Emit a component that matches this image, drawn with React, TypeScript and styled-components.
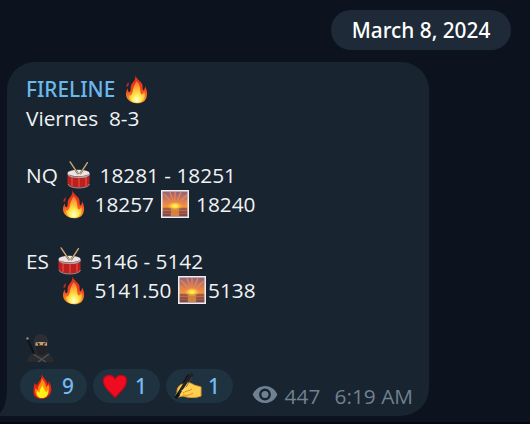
import React from 'react';
import styled, { createGlobalStyle } from 'styled-components';

const Global = createGlobalStyle`
  * { box-sizing: border-box; }
  body { margin: 0; background: #0d131e; overflow: hidden; }
`;

const Chat = styled.main`
  width: 530px;
  height: 424px;
  padding: 10px 19px 0 7px;
  background: #0d131e;
  border-bottom: 2px solid #05080f;
  font-family: 'Open Sans', 'Noto Sans', sans-serif;
  font-size: 20.8px;
  color: #f0f3f5;
`;

const DateBadge = styled.div`
  width: 180px;
  height: 40px;
  margin-left: auto;
  border-radius: 20px;
  background: #1e2a37;
  color: #fff;
  font-family: 'Noto Sans', sans-serif;
  font-weight: 500;
  line-height: 40px;
  text-align: center;
  white-space: nowrap;
`;

const Bubble = styled.article`
  position: relative;
  display: flex;
  flex-direction: column;
  width: 422px;
  height: 354px;
  margin-top: 12px;
  padding: 13px 16px 0 19px;
  border-radius: 28px 28px 28px 0;
  background: #18242f;
`;

const Tail = styled.svg`
  position: absolute;
  left: -7px;
  bottom: 0;
  display: block;
`;

const Line = styled.div<{ $indent?: number }>`
  display: flex;
  align-items: center;
  height: 28.7px;
  flex: none;
  padding-left: ${p => p.$indent ?? 0}px;
  line-height: 28.7px;
  white-space: pre;
`;

const Label = styled.span<{ $width?: number }>`
  flex: none;
  width: ${p => (p.$width ? `${p.$width}px` : 'auto')};
`;

const Channel = styled(Label)`
  color: #6ab8ed;
  font-family: 'Noto Sans', sans-serif;
  font-weight: 500;
`;

const Emoji = styled.svg<{ $gap?: number }>`
  display: block;
  flex: none;
  width: 28px;
  height: 28px;
  margin-right: ${p => p.$gap ?? 0}px;
  overflow: visible;
`;

const Footer = styled.footer`
  display: flex;
  align-items: flex-start;
  flex: none;
  height: 42px;
  margin: 7px 0 0 -6px;
  gap: 6px;
`;

const Reaction = styled.div`
  display: flex;
  align-items: center;
  flex: none;
  width: 67px;
  height: 34px;
  padding-left: 8px;
  border-radius: 17px;
  background: #1e3240;
  color: #77b9f1;
  font-family: 'Noto Sans', sans-serif;
  font-weight: 500;
  line-height: 34px;
`;

const Meta = styled.div`
  display: flex;
  align-items: center;
  height: 28px;
  margin: 13px 0 0 auto;
  color: #708191;
  line-height: 28px;
  white-space: nowrap;
`;

const Eye = styled.svg`
  width: 26px;
  height: 19px;
  margin: -3px 7px 0 0;
  flex: none;
`;

const Views = styled.span`
  width: 50px;
`;

const Fire = ({ id, gap, vivid }: { id: string; gap?: number; vivid?: boolean }) => (
  <Emoji viewBox="0 0 28 28" $gap={gap}>
    <defs>
      <linearGradient id={id} x1="0" y1="0" x2="0" y2="1">
        <stop offset="0" stopColor="#d92d12" />
        <stop offset=".5" stopColor="#f2401b" />
        <stop offset="1" stopColor="#fdb02a" />
      </linearGradient>
      <radialGradient id={`${id}c`} cx=".5" cy=".88" r=".8">
        <stop offset="0" stopColor="#fffde0" />
        <stop offset=".3" stopColor="#fff05d" />
        <stop offset=".68" stopColor="#ffb52e" />
        <stop offset="1" stopColor="#f77845" />
      </radialGradient>
    </defs>
    {vivid ? (
      <g transform="translate(2 2) scale(.89)">
        <path d="M13 0C15 5 19 6 20 12C21 10 21 9 21 8C24 13 25 18 23 22C21 26 17 28 13 28C7 28 3 24 4 18C4 14 5 12 5 10L8 13C9 8 14 7 13 0Z" fill="#e72216" />
        <path d="M13 4C15 8 18 10 18 15L21 12C23 19 21 26 14 27C8 27 5 23 6 16L9 18C9 11 14 10 13 4Z" fill="#ff8d0c" />
        <path d="M14 11C14 16 18 18 18 21L20 18C21 24 18 27 13 27C8 26 7 23 8 19L11 21C10 17 14 15 14 11Z" fill="#fff017" />
      </g>
    ) : (
      <g transform="translate(0 .3) scale(.96 1)">
        <path d="M13 0C14 4 19 6 20 9C21 12 20 14 21 15C22 15 23 13 23 11C26 16 26 22 22 26C18 29 9 29 5 24C2 20 3 16 5 13C5 16 6 17 7 17C9 14 7 12 9 9C11 6 13 5 13 0Z" fill={`url(#${id})`} />
        <path d="M14 6C17 8 18 12 18 15C18 18 19 20 20 19C21 19 22 17 22 16C24 21 22 26 17 27C11 29 6 25 6 19C7 22 9 20 10 17C10 13 12 10 14 6Z" fill={`url(#${id}c)`} />
        <path d="M4 12C3 10 4 8 6 7C6 9 6 11 4 12Z" fill="#c52a1d" />
      </g>
    )}
  </Emoji>
);

const Drum = ({ gap }: { gap: number }) => (
  <Emoji viewBox="0 0 28 28" $gap={gap}>
    <path d="M2.5 12V22C3 28.5 24.5 28.5 24.5 22V12Z" fill="#b9201f" />
    <path d="M7 16V25M14 17V26M21 16V25" stroke="#d53c31" strokeWidth="2" />
    <path d="M3 23C3.5 28.3 24 28.3 24.5 23" fill="none" stroke="#aaa4a8" strokeWidth=".8" />
    <path d="M3 12.5C3.5 17.7 23.5 17.7 24.5 12.5" fill="none" stroke="#a7a5ab" strokeWidth="1.4" />
    <ellipse cx="13.5" cy="12" rx="11" ry="3.2" fill="#e7e5e5" />
    <path d="M5 .8L13.2 13M22.5 1.5L15 13" stroke="#5d4638" strokeWidth="1.9" />
    <path d="M5 .8L13.2 13M22.5 1.5L15 13" stroke="#d7b781" strokeWidth="1.1" strokeLinecap="round" />
  </Emoji>
);

const Sunrise = ({ id, gap }: { id: string; gap: number }) => (
  <Emoji viewBox="0 0 28 28" $gap={gap}>
    <defs>
      <linearGradient id={id} x1="0" y1="0" x2="0" y2="1">
        <stop offset="0" stopColor="#8d6282" />
        <stop offset=".6" stopColor="#f6923c" />
        <stop offset=".66" stopColor="#d57a43" />
        <stop offset="1" stopColor="#874d50" />
      </linearGradient>
      <radialGradient id={`${id}s`}>
        <stop offset="0" stopColor="#fff96b" />
        <stop offset=".4" stopColor="#ffd83e" />
        <stop offset="1" stopColor="#f9a13a" stopOpacity="0" />
      </radialGradient>
    </defs>
    <path d="M0 0H28V28H0Z" fill="#eeedf0" />
    <path d="M1.5 1.5H26.5V26.5H1.5Z" fill={`url(#${id})`} />
    <path d="M14 16L2 11M14 16L3 4M14 16L9 2M14 16L14 2M14 16L20 2M14 16L26 5M14 16L26 12" stroke="#ee824e" strokeWidth="1.3" />
    <path d="M2 19H26M2 22H10M18 22H26M2 25H9M19 25H26" stroke="#71414c" />
    <path d="M10 19H18V26H10Z" fill="#cf833e" />
    <ellipse cx="14" cy="16" rx="8" ry="4.6" fill={`url(#${id}s)`} />
  </Emoji>
);

const Ninja = () => (
  <Emoji viewBox="0 0 28 28">
    <path d="M1 28C2 22 5 20 10 18H19C25 20 27 23 28 28Z" fill="#292b2f" />
    <path d="M8 10C7 3 10 0 15 0S23 4 22 10C22 17 19 21 15 21C10 21 8 16 8 10Z" fill="#2c2e33" />
    <path d="M9.5 8.5C12 7.8 18 7.8 21 8.5V12C18 13 12 13 9.5 12Z" fill="#c29c78" />
    <path d="M11 9L14 10M20 9L17 10" stroke="#4b3933" strokeWidth="1" />
    <path d="M12 10.7H13.5M17 10.7H18.5" stroke="#241f21" strokeWidth="1.5" />
    <path d="M9 12C13 11 18 11 22 12L19 21H12Z" fill="#202226" />
    <path d="M7 20L20 28M23 20L12 28" fill="none" stroke="#505258" strokeWidth="1.3" />
    <path d="M1 4L8 20" stroke="#111319" strokeWidth="2" />
    <circle cx="1.5" cy="4.5" r="1.2" fill="#8b8c8f" />
  </Emoji>
);

const Heart = () => (
  <Emoji viewBox="0 0 28 28" $gap={6}>
    <path d="M14 25.5C9 20 3 16 2.5 10C1.5 4 8 2 12 4.5L14 7C17 2 25 2 25.5 8C26 15 19 20 14 25.5Z" fill="#ef0b20" stroke="#b70b18" strokeWidth="1.2" />
  </Emoji>
);

const Writing = () => (
  <Emoji viewBox="0 0 28 28" $gap={6}>
    <path d="M3 20C3 16 5 13 9 12C13 9 17 11 20 13L27 15V24C22 26 15 26 9 24L4 25C1 25 2 22 3 21Z" fill="#ffcf4d" stroke="#df9732" />
    <path d="M9 21C12 18 14 20 18 17M9 23C13 24 16 23 19 21" fill="none" stroke="#d8902c" />
    <path d="M3 24L16 4" stroke="#202226" strokeWidth="3.2" />
    <path d="M15 6L17.5 3" stroke="#202226" strokeWidth="3.8" strokeLinecap="round" />
    <path d="M9 11L14 3" fill="none" stroke="#101216" strokeWidth="1.4" strokeLinecap="round" />
    <path d="M5 22L1.5 26" stroke="#101216" strokeWidth="3" />
    <path d="M11 17L18 5" stroke="#4a4c52" strokeWidth=".7" />
    <path d="M7 19L12 15L15 16L10 20Z" fill="#ffd65e" />
  </Emoji>
);

export default function App() {
  return (
    <>
      <Global />
      <Chat>
        <DateBadge>March 8, 2024</DateBadge>
        <Bubble>
          <Tail width="8" height="29" viewBox="0 0 8 29"><path d="M8 0H7C7 12 5 21 0 26V29H8Z" fill="#18242f" /></Tail>
          <Line><Channel $width={96.5}>FIRELINE</Channel><Fire id="fire-title" /></Line>
          <Line>Viernes  8-3</Line>
          <Line />
          <Line><Label $width={38.5}>NQ</Label><Drum gap={7} /><Label>18281 - 18251</Label></Line>
          <Line $indent={34}><Fire id="fire-nq" gap={6.5} /><Label $width={66.5}>18257</Label><Sunrise id="sun-nq" gap={7} /><Label>18240</Label></Line>
          <Line />
          <Line><Label $width={29.5}>ES</Label><Drum gap={7} /><Label>5146 - 5142</Label></Line>
          <Line $indent={34}><Fire id="fire-es" gap={6.5} /><Label $width={83.5}>5141.50</Label><Sunrise id="sun-es" gap={2} /><Label>5138</Label></Line>
          <Line />
          <Line><Ninja /></Line>
          <Footer>
            <Reaction><Fire id="fire-reaction" gap={6} vivid />9</Reaction>
            <Reaction><Heart />1</Reaction>
            <Reaction><Writing />1</Reaction>
            <Meta>
              <Eye viewBox="0 0 26 20">
                <path fillRule="evenodd" d="M0 10C5 -2 21 -2 26 10C21 22 5 22 0 10ZM13 3.8A6.2 6.2 0 1 0 13 16.2A6.2 6.2 0 1 0 13 3.8Z" fill="#708191" />
                <circle cx="13" cy="10" r="3.7" fill="#708191" />
              </Eye>
              <Views>447</Views><span>6:19 AM</span>
            </Meta>
          </Footer>
        </Bubble>
      </Chat>
    </>
  );
}
